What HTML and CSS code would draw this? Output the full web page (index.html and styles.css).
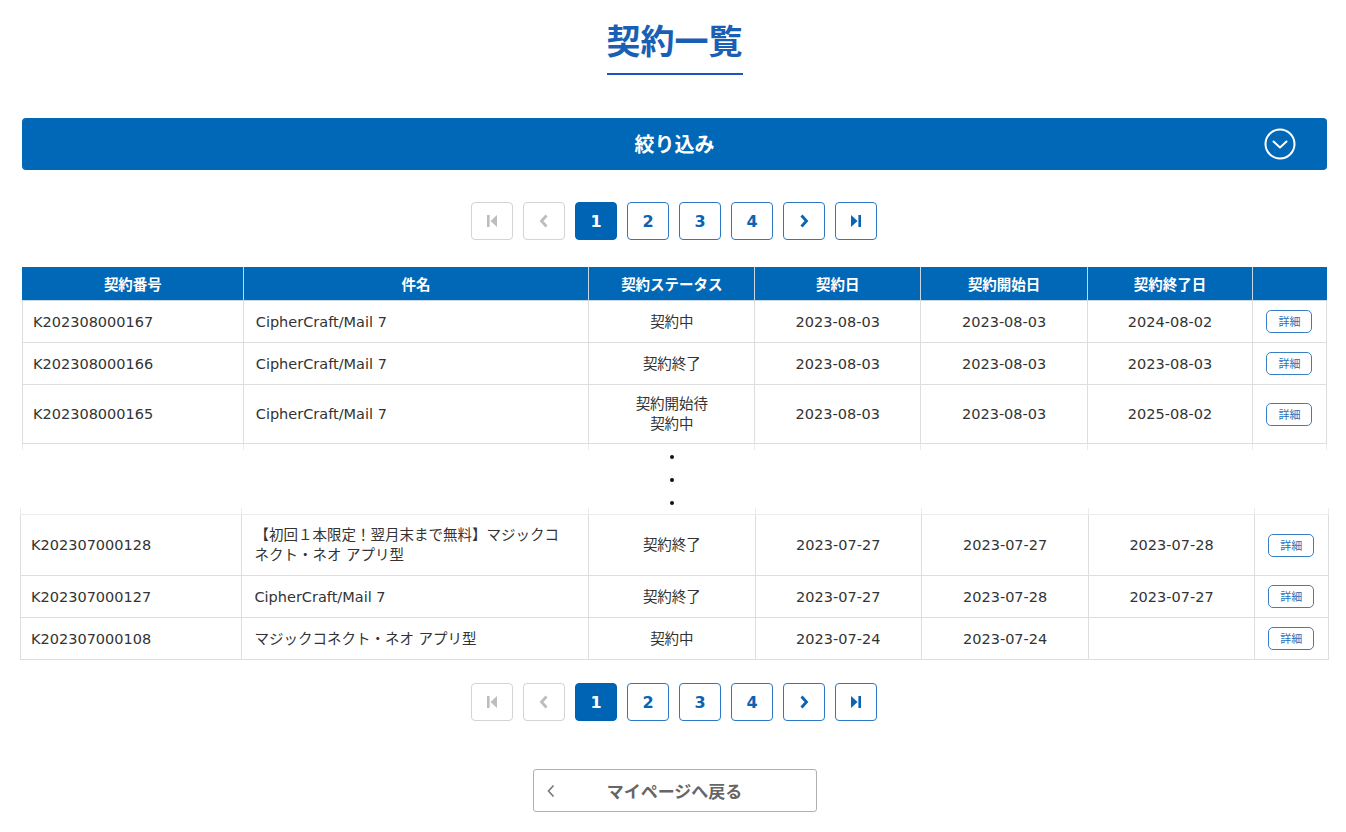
FILE: index.html
```html
<!DOCTYPE html>
<html lang="ja">
<head>
<meta charset="utf-8">
<title>契約一覧</title>
<link rel="stylesheet" href="styles.css">
</head>
<body>
<main class="page">
  <div class="title-wrap"><h1 class="title">契約一覧</h1></div>

  <button class="filter" type="button">
    <span class="filter-label">絞り込み</span>
    <span class="filter-icon">
      <svg viewBox="0 0 32 32" width="32" height="32"><circle cx="16" cy="16" r="14.5" fill="none" stroke="#fff" stroke-width="2"/><path d="M9.5 13.5 L16 19.5 L22.5 13.5" fill="none" stroke="#fff" stroke-width="2" stroke-linecap="round" stroke-linejoin="round"/></svg>
    </span>
  </button>

  <nav class="pager">
    <span class="pg disabled"><svg viewBox="0 0 12 14" width="12" height="14"><rect x="1" y="1" width="2.6" height="12" fill="currentColor"/><path d="M11 1 L4.5 7 L11 13 Z" fill="currentColor"/></svg></span>
    <span class="pg disabled"><svg viewBox="0 0 12 14" width="12" height="14"><path d="M8.5 1.5 L3.5 7 L8.5 12.5" fill="none" stroke="currentColor" stroke-width="2.8" stroke-linejoin="miter"/></svg></span>
    <span class="pg active">1</span>
    <a class="pg" href="#">2</a>
    <a class="pg" href="#">3</a>
    <a class="pg" href="#">4</a>
    <a class="pg" href="#"><svg viewBox="0 0 12 14" width="12" height="14"><path d="M3.5 1.5 L8.5 7 L3.5 12.5" fill="none" stroke="currentColor" stroke-width="2.8" stroke-linejoin="miter"/></svg></a>
    <a class="pg" href="#"><svg viewBox="0 0 12 14" width="12" height="14"><path d="M1 1 L7.5 7 L1 13 Z" fill="currentColor"/><rect x="8.4" y="1" width="2.6" height="12" fill="currentColor"/></svg></a>
  </nav>

  <table class="list list-top">
    <colgroup>
      <col class="c-no"><col class="c-name"><col class="c-st"><col class="c-d1"><col class="c-d2"><col class="c-d3"><col class="c-btn">
    </colgroup>
    <thead>
      <tr><th>契約番号</th><th>件名</th><th>契約ステータス</th><th>契約日</th><th>契約開始日</th><th>契約終了日</th><th></th></tr>
    </thead>
    <tbody>
      <tr><td class="l">K202308000167</td><td class="l">CipherCraft/Mail 7</td><td>契約中</td><td>2023-08-03</td><td>2023-08-03</td><td>2024-08-02</td><td><a class="detail" href="#">詳細</a></td></tr>
      <tr><td class="l">K202308000166</td><td class="l">CipherCraft/Mail 7</td><td>契約終了</td><td>2023-08-03</td><td>2023-08-03</td><td>2023-08-03</td><td><a class="detail" href="#">詳細</a></td></tr>
      <tr><td class="l">K202308000165</td><td class="l">CipherCraft/Mail 7</td><td>契約開始待<br>契約中</td><td>2023-08-03</td><td>2023-08-03</td><td>2025-08-02</td><td><a class="detail" href="#">詳細</a></td></tr>
      <tr class="stub stub-bottom"><td></td><td></td><td></td><td></td><td></td><td></td><td></td></tr>
    </tbody>
  </table>

  <div class="ellipsis"><span class="dot"></span><span class="dot"></span><span class="dot"></span></div>

  <table class="list list-bottom">
    <colgroup>
      <col class="c-no"><col class="c-name"><col class="c-st"><col class="c-d1"><col class="c-d2"><col class="c-d3"><col class="c-btn">
    </colgroup>
    <tbody>
      <tr class="stub stub-top"><td></td><td></td><td></td><td></td><td></td><td></td><td></td></tr>
      <tr class="tall"><td class="l">K202307000128</td><td class="l name">【初回１本限定！翌月末まで無料】マジックコネクト・ネオ アプリ型</td><td>契約終了</td><td>2023-07-27</td><td>2023-07-27</td><td>2023-07-28</td><td><a class="detail" href="#">詳細</a></td></tr>
      <tr><td class="l">K202307000127</td><td class="l">CipherCraft/Mail 7</td><td>契約終了</td><td>2023-07-27</td><td>2023-07-28</td><td>2023-07-27</td><td><a class="detail" href="#">詳細</a></td></tr>
      <tr><td class="l">K202307000108</td><td class="l">マジックコネクト・ネオ アプリ型</td><td>契約中</td><td>2023-07-24</td><td>2023-07-24</td><td></td><td><a class="detail" href="#">詳細</a></td></tr>
    </tbody>
  </table>

  <nav class="pager pager-bottom">
    <span class="pg disabled"><svg viewBox="0 0 12 14" width="12" height="14"><rect x="1" y="1" width="2.6" height="12" fill="currentColor"/><path d="M11 1 L4.5 7 L11 13 Z" fill="currentColor"/></svg></span>
    <span class="pg disabled"><svg viewBox="0 0 12 14" width="12" height="14"><path d="M8.5 1.5 L3.5 7 L8.5 12.5" fill="none" stroke="currentColor" stroke-width="2.8" stroke-linejoin="miter"/></svg></span>
    <span class="pg active">1</span>
    <a class="pg" href="#">2</a>
    <a class="pg" href="#">3</a>
    <a class="pg" href="#">4</a>
    <a class="pg" href="#"><svg viewBox="0 0 12 14" width="12" height="14"><path d="M3.5 1.5 L8.5 7 L3.5 12.5" fill="none" stroke="currentColor" stroke-width="2.8" stroke-linejoin="miter"/></svg></a>
    <a class="pg" href="#"><svg viewBox="0 0 12 14" width="12" height="14"><path d="M1 1 L7.5 7 L1 13 Z" fill="currentColor"/><rect x="8.4" y="1" width="2.6" height="12" fill="currentColor"/></svg></a>
  </nav>

  <div class="back-wrap">
    <a class="back" href="#">
      <span class="back-icon"><svg viewBox="0 0 10 14" width="10" height="14"><path d="M7.5 1.5 L2.5 7 L7.5 12.5" fill="none" stroke="#777" stroke-width="1.6"/></svg></span>
      <span class="back-label">マイページへ戻る</span>
      <span></span>
    </a>
  </div>
</main>
</body>
</html>
```

FILE: styles.css
```css
* { box-sizing: border-box; }

body {
  margin: 0;
  background: #fff;
  color: #333;
  font-family: "DejaVu Sans", "Noto Sans CJK JP", sans-serif;
}

.page {
  width: 1305px;
  margin-left: 22px;
}

.title-wrap {
  text-align: center;
  padding-top: 20px;
}

.title {
  display: inline-block;
  margin: 0;
  padding-bottom: 13px;
  font-family: "Noto Sans CJK JP", sans-serif;
  font-size: 34px;
  line-height: 40px;
  font-weight: 700;
  color: #1a5fb4;
  border-bottom: 2px solid #1f52c2;
}

.filter {
  display: grid;
  grid-template-columns: 1fr auto 1fr;
  align-items: center;
  width: 100%;
  height: 52px;
  margin-top: 43px;
  padding: 0 31px;
  border: 0;
  border-radius: 4px;
  background: #0068b7;
  color: #fff;
  font-family: "Noto Sans CJK JP", sans-serif;
  cursor: pointer;
}

.filter-label {
  grid-column: 2;
  font-size: 20px;
  font-weight: 700;
  line-height: 1;
}

.filter-icon {
  grid-column: 3;
  justify-self: end;
  display: flex;
}

.pager {
  display: flex;
  justify-content: center;
  gap: 10px;
  margin-top: 32px;
  padding-right: 1px;
}

.pager-bottom { margin-top: 23px; }

.pg {
  display: flex;
  align-items: center;
  justify-content: center;
  width: 42px;
  height: 38px;
  border: 1px solid #2a78c6;
  border-radius: 4px;
  background: #fff;
  color: #0a63b3;
  font-family: "DejaVu Sans", sans-serif;
  font-size: 16px;
  font-weight: 700;
  text-decoration: none;
}

.pg.active {
  background: #0064b4;
  border-color: #0064b4;
  color: #fff;
}

.pg.disabled {
  border-color: #d4d4d4;
  color: #bdbdbd;
}

.list {
  width: 100%;
  table-layout: fixed;
  border-collapse: collapse;
  font-size: 14.5px;
  line-height: 20px;
}

.list-top { margin-top: 27px; }

.list-bottom {
  width: 1309px;
  margin-left: -2px;
}

.c-no { width: 16.93%; }
.c-name { width: 26.51%; }
.c-st { width: 12.72%; }
.c-d1 { width: 12.72%; }
.c-d2 { width: 12.8%; }
.c-d3 { width: 12.64%; }
.c-btn { width: 5.68%; }

.list th {
  height: 33px;
  padding: 0 4px;
  background: #0068b7;
  color: #fff;
  font-family: "Noto Sans CJK JP", sans-serif;
  font-size: 14.5px;
  font-weight: 700;
  text-align: center;
  border: 1px solid #c9d6e4;
  border-top-color: #0068b7;
}

.list th:first-child { border-left-color: #0068b7; }
.list th:last-child { border-right-color: #0068b7; }

.list td {
  height: 42px;
  padding: 9px 12px;
  text-align: center;
  vertical-align: middle;
  border: 1px solid #dedede;
}

.list td.l { text-align: left; }
.list td:first-child { padding-left: 10px; }
.list td.name { padding-right: 22px; }

.list tr.tall td { padding-top: 10px; padding-bottom: 10px; }

.list tr.stub td {
  height: 6px;
  padding: 0;
  border-color: #ececec;
}

.list tr.stub-bottom td { border-bottom: 0; }

.list tr.stub-top td {
  height: 7px;
  border-top: 0;
}

.detail {
  display: inline-flex;
  align-items: center;
  justify-content: center;
  width: 46px;
  height: 23px;
  border: 1px solid #3a7fc6;
  border-radius: 5px;
  color: #2a6fb8;
  font-family: "Noto Sans CJK JP", sans-serif;
  font-size: 11px;
  line-height: 1;
  text-decoration: none;
}

.ellipsis {
  display: flex;
  flex-direction: column;
  align-items: center;
  gap: 19px;
  padding: 5px 5px 3px 0;
}

.dot {
  width: 4px;
  height: 4px;
  border-radius: 50%;
  background: #111;
}

.back-wrap {
  display: flex;
  justify-content: center;
  margin-top: 48px;
  padding-bottom: 20px;
}

.back {
  display: grid;
  grid-template-columns: 1fr auto 1fr;
  align-items: center;
  width: 284px;
  height: 43px;
  padding: 0 12px;
  border: 1px solid #b0b0b0;
  border-radius: 3px;
  background: #fff;
  color: #666;
  text-decoration: none;
  font-family: "Noto Sans CJK JP", sans-serif;
}

.back-icon { display: flex; }

.back-label {
  font-size: 17px;
  font-weight: 700;
  line-height: 1;
}
```
